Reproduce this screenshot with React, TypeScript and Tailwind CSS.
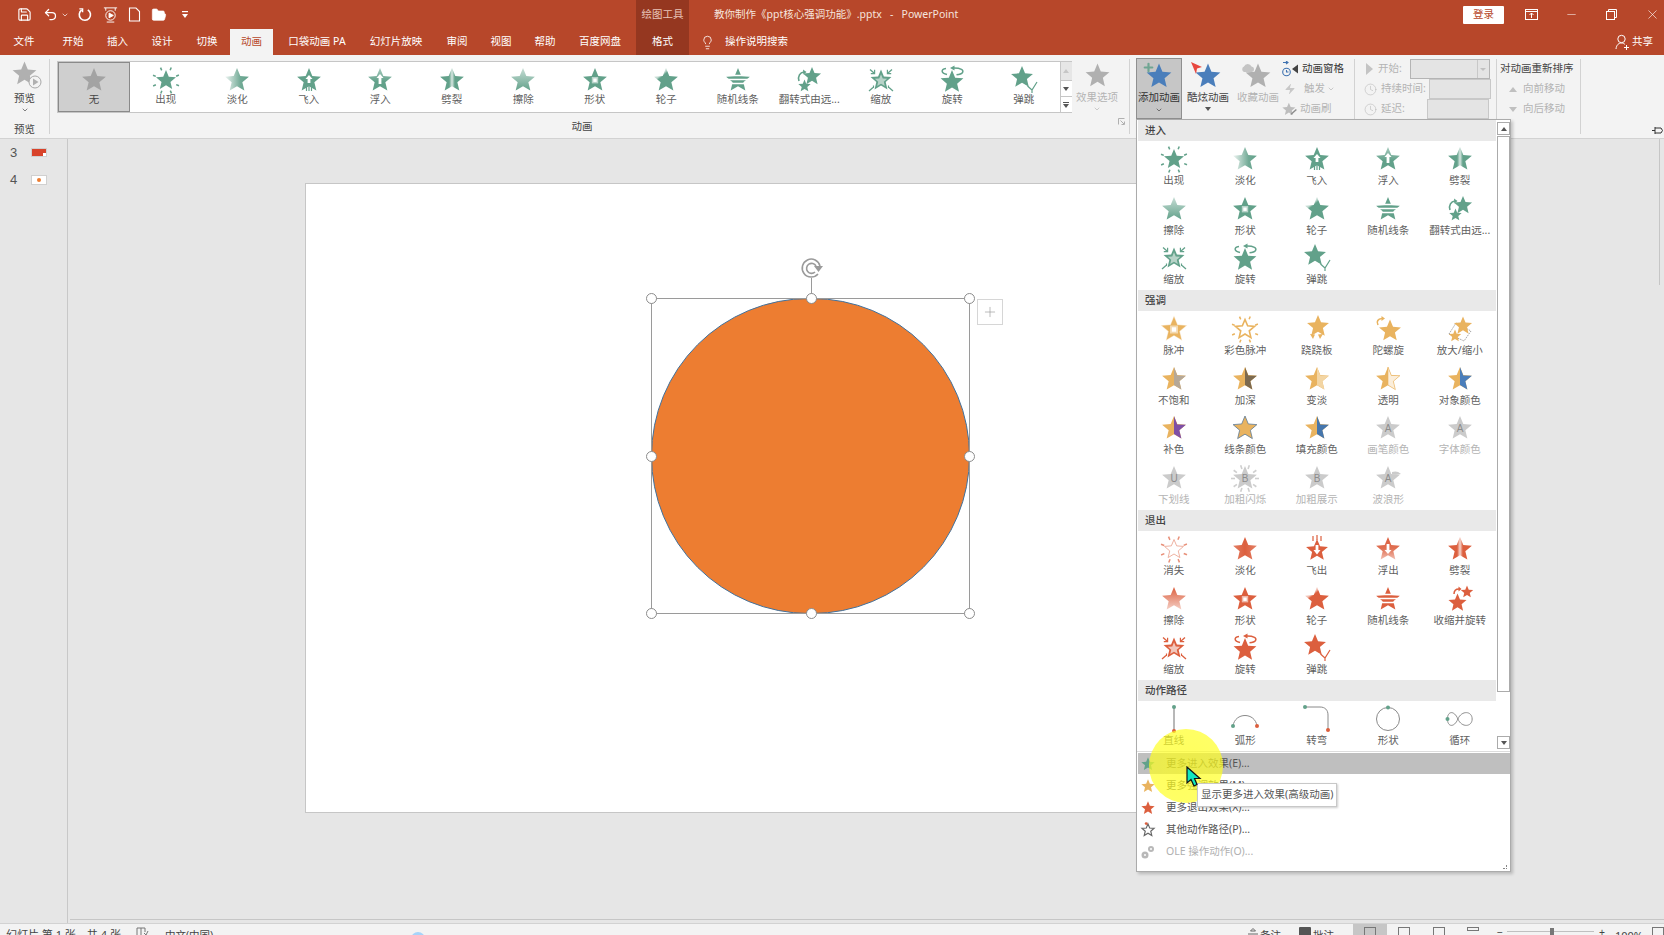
import { useId, type ReactNode } from "react"
import { ChevronDown, Clock, FolderOpen, Lightbulb, Minus, Plus, Save, Undo2, X, Zap } from "lucide-react"

const GREEN = "#62a18a"
const GOLD = "#e9b35f"
const RED = "#dc5f3e"
const GRAY = "#cbcbcb"
const BLUE = "#4a7ebb"

function starPts(cx: number, cy: number, r: number) {
    let pts: string[] = []
    for (let i = 0; i < 10; i++) {
        const a = (-90 + i * 36) * Math.PI / 180
        const rad = i % 2 == 0 ? r : r * 0.45
        pts.push((cx + rad * Math.cos(a)).toFixed(2) + "," + (cy + rad * Math.sin(a)).toFixed(2))
    }
    return pts.join(" ")
}

function rays(cx: number, cy: number, r1: number, r2: number, color: string, n = 8, off = 22, w = 1.5) {
    return Array.from({ length: n }).map((_, i) => {
        const a = (off + i * 360 / n) * Math.PI / 180
        return <line key={i} x1={cx + r1 * Math.cos(a)} y1={cy + r1 * Math.sin(a)} x2={cx + r2 * Math.cos(a)} y2={cy + r2 * Math.sin(a)} stroke={color} strokeWidth={w} />
    })
}

const GRADS: Record<string, [number, number, number, number, [number, number][]]> = {
    fade: [0, 0, 1, 0, [[0, 0.12], [0.65, 0.9], [1, 1]]],
    fadeout: [0, 0, 1, 0, [[0, 0.8], [0.5, 1], [0.85, 0.85], [1, 0.8]]],
    split: [0, 0, 1, 0, [[0, 1], [0.38, 1], [0.5, 0.25], [0.62, 1], [1, 1]]],
    wipe: [0, 0, 0, 1, [[0, 0.35], [1, 1]]],
    wipeout: [0, 0, 0, 1, [[0, 1], [1, 0.3]]],
    float: [0, 0, 0, 1, [[0, 0.55], [0.6, 1], [1, 1]]],
    floatout: [0, 0, 0, 1, [[0, 1], [0.5, 0.9], [1, 0.4]]],
    wheel: [0, 0, 0.6, 0.7, [[0, 0.1], [0.45, 0.4], [0.55, 1], [1, 1]]],
}

function AnimIcon({ k, c }: { k: string, c: string }) {
    const g = "g" + useId().replace(/[^a-zA-Z0-9]/g, "")
    const grad = GRADS[k]
    const main = starPts(12, 12.5, 12.5)
    const rightHalf = "12,0 15.3,8.45 23.9,8.64 17.35,14.24 19.35,22.61 12,18.1"
    let body: ReactNode = <polygon points={main} fill={grad ? `url(#${g})` : c} />
    const arrowUp = <path d="M12 6 L8.5 10 H10.6 V16 H13.4 V10 H15.5 Z" fill="#fff" />
    const half = (col: string) => <>
        <polygon points={main} fill={c} />
        <polygon points={rightHalf} fill={col} />
    </>
    const letter = (t: string, extra?: ReactNode) => <>
        {extra}
        <polygon points={main} fill={c} />
        <text x="12" y="16" textAnchor="middle" fontSize="10" fill="#8b8b8b" fontFamily="Liberation Sans, sans-serif">{t}</text>
    </>
    switch (k) {
        case "appear":
            body = <><polygon points={starPts(12, 12.5, 10.5)} fill={c} />{rays(12, 12.5, 11, 14, c)}</>
            break
        case "vanish":
            body = <><polygon points={starPts(12, 12.5, 10)} fill="#fff" stroke="#eeb2a2" strokeWidth="1" />{rays(12, 12.5, 10.5, 14, "#e88f78")}</>
            break
        case "fly":
            body = <><polygon points={main} fill={c} /><path d="M12 7 L8.5 11 H10.6 V15 H13.4 V11 H15.5 Z" fill="#fff" /><path d="M9.5 17 v6 M12 17 v6 M14.5 17 v6" stroke={c} strokeWidth="1.2" /></>
            break
        case "flyout":
            body = <><polygon points={starPts(12, 13.5, 11.5)} fill={c} /><path d="M10.6 8 V13 H8.5 L12 17.5 L15.5 13 H13.4 V8 Z" fill="#fff" /><path d="M8 -1 v5 M12 -2 v5 M16 -1 v5" stroke={c} strokeWidth="1.2" /></>
            break
        case "float":
            body = <><polygon points={main} fill={`url(#${g})`} />{arrowUp}</>
            break
        case "floatout":
            body = <><polygon points={main} fill={`url(#${g})`} /><path d="M10.6 7 V13 H8.5 L12 17 L15.5 13 H13.4 V7 Z" fill="#fff" /></>
            break
        case "shape":
            body = <><polygon points={main} fill={c} /><rect x="8.8" y="9" width="6.4" height="6.4" fill="#fff" opacity="0.55" /><rect x="10.3" y="10.5" width="3.4" height="3.4" fill="#fff" /></>
            break
        case "lines":
            body = <><polygon points={main} fill={c} /><path d="M0 7.6 H24 M0 11.4 H24 M0 15.4 H24" stroke="#fff" strokeWidth="1.5" /></>
            break
        case "flip":
            body = <><polygon points={starPts(15, 8.5, 9.5)} fill={c} /><polygon points={starPts(7.5, 18, 6.5)} fill={c} /><path d="M2 13 C0.5 8 3 4.5 7 4" stroke={c} strokeWidth="1.6" fill="none" /><path d="M6 1.5 L9.5 4 L6.5 6.5 Z" fill={c} /></>
            break
        case "shrinkspin":
            body = <><polygon points={starPts(9.5, 16, 9.5)} fill={c} /><polygon points={starPts(19, 5, 6.5)} fill={c} /><path d="M6 7 C6 3 8 2 11 2" stroke={c} strokeWidth="1.5" fill="none" /><path d="M10.5 -0.5 L13.5 2 L10.5 4.5 Z" fill={c} /></>
            break
        case "zoom":
            body = <>
                <polygon points={starPts(12, 12.5, 11)} fill={c} />
                <polygon points={starPts(12, 12.8, 6.5)} fill={c == RED ? "#f2c7bb" : "#b7d3c8"} />
                <path d="M1 1.5 L5 5 M23 1.5 L19 5 M0 23 L4 19.5 M24 23 L20 19.5" stroke={c} strokeWidth="1.3" />
                <path d="M5.6 1.8 V5.6 H1.8 M18.4 1.8 V5.6 H22.2 M4.5 17.4 V20 M19.5 17.4 V20" stroke={c} strokeWidth="1.2" fill="none" />
            </>
            break
        case "spin":
            body = <>
                <polygon points={starPts(12, 14, 12)} fill={c} />
                <path d="M7 6.5 C1 5 0.5 1.5 6 0.5 M14 0 C21 0 24 2 22.5 4.5 C21.5 6 19 6.5 16.5 6.8" stroke={c} strokeWidth="1.5" fill="none" />
                <path d="M14.5 -2.5 L10 0 L14.5 2.5 Z" fill={c} />
            </>
            break
        case "bounce":
            body = <>
                <polygon points={starPts(10, 9.5, 11.5)} fill={c} />
                <path d="M15.5 18 L20 22 L25 14 M20 22 V25" stroke={c} strokeWidth="1.2" fill="none" />
            </>
            break
        case "pulse":
            body = <>
                <polygon points={starPts(12, 12.5, 14)} fill={c} opacity="0.35" />
                <polygon points={main} fill={c} />
                <rect x="8" y="8.5" width="8" height="8" fill="#fff" opacity="0.5" />
                <rect x="9.8" y="10.3" width="4.4" height="4.4" fill="#fff" />
            </>
            break
        case "colorpulse":
            body = <><polygon points={starPts(12, 12.5, 10)} fill="#fff" stroke={c} strokeWidth="1.6" />{rays(12, 12.5, 11, 14, c)}</>
            break
        case "teeter":
            body = <>
                <polygon points={starPts(13, 9.5, 11.5)} fill={c} />
                <path d="M5 17 L8 22 L10 17.5 Z M18 17 L15 22 L13 17.5 Z" fill={c} />
            </>
            break
        case "spinner":
            body = <>
                <polygon points={starPts(14, 14, 11.5)} fill={c} />
                <path d="M2 8 C0 4 2 2 6 1.5" stroke={c} strokeWidth="1.6" fill="none" />
                <path d="M5.5 -1 L9 1.5 L5.5 4 Z" fill={c} />
            </>
            break
        case "grow":
            body = <>
                <path d="M1 17 L8 6 L23 14 L16 24 Z" fill="none" stroke="#8b8b8b" strokeWidth="0.8" strokeDasharray="1.5 1" />
                <polygon points={starPts(15, 9, 9.5)} fill={c} />
                <polygon points={starPts(7, 19, 6.5)} fill={c} />
            </>
            break
        case "desat": body = half("#b5a898"); break
        case "darken": body = half("#7c6a50"); break
        case "lighten": body = half("#f3d5a3"); break
        case "transp": body = <><polygon points={main} fill={c} /><polygon points={rightHalf} fill="#fbeedb" stroke={c} strokeWidth="0.6" /></>; break
        case "objcolor": body = half(BLUE); break
        case "complement": body = half("#7e4fa6"); break
        case "linecolor":
            body = <><polygon points={main} fill={c} stroke="#5d7a96" strokeWidth="0.8" /></>
            break
        case "fillcolor": body = half("#4576ad"); break
        case "A": body = letter("A"); break
        case "U": body = letter("U"); break
        case "B": body = letter("B"); break
        case "Bray": body = letter("B", rays(12, 12.5, 10, 14, "#cfcfcf", 10, 0, 1.6)); break
        case "wave":
            body = <>{letter("A")}<path d="M16 6 C19 5 22 5 25 8 C21 9 18 9 16 8 Z" fill={c} /></>
            break
        case "pline":
            body = <><line x1="12" y1="0" x2="12" y2="24" stroke="#9a9a9a" strokeWidth="1.4" /><circle cx="12" cy="0" r="2" fill={GREEN} /><circle cx="12" cy="24" r="2" fill={RED} /></>
            break
        case "parc":
            body = <><path d="M0 19 C2 5 22 5 24 19" fill="none" stroke="#8a8a8a" strokeWidth="1" /><circle cx="0" cy="19" r="2" fill={GREEN} /><circle cx="24" cy="19" r="2" fill={RED} /></>
            break
        case "pturn":
            body = <><path d="M0 0 H15 C20 0 23 3 23 8 V23" fill="none" stroke="#8a8a8a" strokeWidth="1" /><circle cx="0" cy="0" r="2" fill={GREEN} /><circle cx="23" cy="23" r="2" fill={RED} /></>
            break
        case "pcircle":
            body = <><circle cx="12" cy="12" r="11.5" fill="none" stroke="#8a8a8a" strokeWidth="1" /><circle cx="12" cy="0.5" r="2" fill={GREEN} /></>
            break
        case "ploop":
            body = <><path d="M12 12 C8 3 1 4 1 12 C1 20 8 21 12 12 C16 3 27 4 27 12 C27 20 16 21 12 12 Z" transform="translate(-1.5 0) scale(0.95 1)" fill="none" stroke="#8a8a8a" strokeWidth="1" /><circle cx="-0.5" cy="12" r="2" fill={GREEN} /></>
            break
    }
    return <svg width="26" height="26" viewBox="-1 -1 26 26" className="overflow-visible shrink-0">
        {grad && <defs><linearGradient id={g} x1={grad[0]} y1={grad[1]} x2={grad[2]} y2={grad[3]}>
            {grad[4].map(([o, a], i) => <stop key={i} offset={o} stopColor={c} stopOpacity={a} />)}
        </linearGradient></defs>}
        {body}
    </svg>
}

function BigStar({ color, size = 28 }: { color: string, size?: number }) {
    return <svg width={size} height={size} viewBox="0 0 24 24"><polygon points={starPts(12, 12.5, 12)} fill={color} /></svg>
}

function Cell({ label, k, c, dim, tight, width = "w-[71.5px]" }: { label: string, k: string, c: string, dim?: boolean, tight?: boolean, width?: string }) {
    return <div className={`${width} h-full flex flex-col items-center pt-[5px] shrink-0`}>
        <AnimIcon k={k} c={c} />
        <span className={`${tight ? "mt-[0px]" : "mt-[2px]"} text-[10.5px] leading-[12px] whitespace-nowrap ${dim ? "text-[#b4b4b4]" : "text-[#5f5f5f]"}`}>{label}</span>
    </div>
}

const ENTER: [string, string][] = [["出现", "appear"], ["淡化", "fade"], ["飞入", "fly"], ["浮入", "float"], ["劈裂", "split"], ["擦除", "wipe"], ["形状", "shape"], ["轮子", "wheel"], ["随机线条", "lines"], ["翻转式由远...", "flip"], ["缩放", "zoom"], ["旋转", "spin"], ["弹跳", "bounce"]]
const EMPHASIS: [string, string, string][] = [["脉冲", "pulse", GOLD], ["彩色脉冲", "colorpulse", GOLD], ["跷跷板", "teeter", GOLD], ["陀螺旋", "spinner", GOLD], ["放大/缩小", "grow", GOLD], ["不饱和", "desat", GOLD], ["加深", "darken", GOLD], ["变淡", "lighten", GOLD], ["透明", "transp", GOLD], ["对象颜色", "objcolor", GOLD], ["补色", "complement", GOLD], ["线条颜色", "linecolor", GOLD], ["填充颜色", "fillcolor", GOLD], ["画笔颜色", "A", GRAY], ["字体颜色", "A", GRAY], ["下划线", "U", GRAY], ["加粗闪烁", "Bray", GRAY], ["加粗展示", "B", GRAY], ["波浪形", "wave", GRAY]]
const EXIT: [string, string][] = [["消失", "vanish"], ["淡化", "fadeout"], ["飞出", "flyout"], ["浮出", "floatout"], ["劈裂", "split"], ["擦除", "wipeout"], ["形状", "shape"], ["轮子", "wheel"], ["随机线条", "lines"], ["收缩并旋转", "shrinkspin"], ["缩放", "zoom"], ["旋转", "spin"], ["弹跳", "bounce"]]
const PATHS: [string, string][] = [["直线", "pline"], ["弧形", "parc"], ["转弯", "pturn"], ["形状", "pcircle"], ["循环", "ploop"]]

const TABS = [
    { t: "文件", w: "w-[48px]" }, { t: "开始", w: "w-[50px]" }, { t: "插入", w: "w-[39px]" }, { t: "设计", w: "w-[50px]" },
    { t: "切换", w: "w-[43px] pr-[3px]" }, { t: "动画", w: "w-[43px]", active: true }, { t: "口袋动画 PA", w: "w-[90px] pr-[2px]" },
    { t: "幻灯片放映", w: "w-[66px]" }, { t: "审阅", w: "w-[56px]" }, { t: "视图", w: "w-[32px]" }, { t: "帮助", w: "w-[56px]" }, { t: "百度网盘", w: "w-[54px] mr-[9px]" },
]

function SectionHead({ t }: { t: string }) {
    return <div className="h-[21px] bg-[#e9e9e9] pl-[7px] text-[10.5px] leading-[21px] font-medium text-[#444444]">{t}</div>
}

function Section({ t, children }: { t: string, children: ReactNode }) {
    return <>
        <SectionHead t={t} />
        <div className="grid grid-cols-[repeat(5,71.5px)] auto-rows-[49.7px]">{children}</div>
    </>
}

function MiniStar({ c }: { c: string }) {
    return <svg width="14" height="14" viewBox="0 0 24 24"><polygon points={starPts(12, 12.5, 12)} fill={c} /></svg>
}

function Handle({ cls }: { cls: string }) {
    return <div className={`absolute w-[11px] h-[11px] rounded-full bg-white border-[1.5px] border-[#8c8c8c] ${cls}`} />
}

export default function App() {
    return <div className="relative w-[1664px] h-[935px] overflow-hidden flex flex-col bg-[#e6e6e6] font-['Noto_Sans','Noto_Sans_CJK_SC',sans-serif] text-[10.5px]">
        {/* title bar */}
        <div className="h-[29px] bg-[#b7472a] flex items-center text-white shrink-0">
            <div className="w-[636px] flex items-center h-full pl-[17px]">
                <Save size={15} strokeWidth={1.8} />
                <Undo2 size={15} strokeWidth={2} className="ml-[11px]" />
                <ChevronDown size={8} className="ml-[3px]" />
                <svg width="15" height="15" viewBox="0 0 16 16" fill="none" stroke="white" strokeWidth="1.7" className="ml-[8px]"><path d="M5 3.2 A6 6 0 1 0 11.5 3" /><path d="M2.5 2 H6 V5.5" strokeWidth="1.4" /></svg>
                <svg width="17" height="17" viewBox="0 0 18 18" fill="none" stroke="white" strokeWidth="1" className="ml-[10px]"><path d="M2 2 H16 M4 2 V5 M14 2 V5 M5 17 H13" /><circle cx="9" cy="10" r="5" /><path d="M7.5 7.5 L12 10 L7.5 12.5 Z" fill="white" /></svg>
                <svg width="13" height="15" viewBox="0 0 13 15" fill="none" stroke="white" strokeWidth="1.1" className="ml-[9px]"><path d="M1.5 1 H8 L11.5 4.5 V14 H1.5 Z" /></svg>
                <FolderOpen size={16} fill="white" strokeWidth={1} className="ml-[10px]" />
                <svg width="8" height="9" viewBox="0 0 8 9" className="ml-[14px]" fill="white"><rect x="1" y="1" width="6" height="1.2" /><path d="M1 4 H7 L4 8 Z" /></svg>
            </div>
            <div className="w-[53px] h-full bg-[#953720] flex items-center justify-center text-[#e8c4b8] pt-[1px]">绘图工具</div>
            <span className="ml-[25px] text-[#f6e4dd] whitespace-nowrap pt-[1px]">教你制作《ppt核心强调功能》.pptx&nbsp;&nbsp; - &nbsp;&nbsp;PowerPoint</span>
            <div className="ml-auto flex items-center h-full">
                <div className="w-[41px] h-[18px] bg-white rounded-[1px] text-[#b7472a] flex items-center justify-center">登录</div>
                <svg width="13" height="11" viewBox="0 0 13 11" fill="none" stroke="white" strokeWidth="1" className="ml-[21px]"><rect x="0.5" y="0.5" width="12" height="10" /><path d="M0.5 2.5 H12.5" /><path d="M6.5 9 V4 M4.5 6 L6.5 4 L8.5 6" /></svg>
                <Minus size={13} strokeWidth={1} className="ml-[27px]" />
                <svg width="11" height="11" viewBox="0 0 11 11" fill="none" stroke="white" strokeWidth="1" className="ml-[28px]"><rect x="0.5" y="2.5" width="8" height="8" /><path d="M2.5 2.5 V0.5 H10.5 V8.5 H8.5" /></svg>
                <X size={15} strokeWidth={1} className="ml-[28px] mr-[4px]" />
            </div>
        </div>
        {/* tabs */}
        <div className="h-[26px] bg-[#b7472a] flex text-white shrink-0">
            {TABS.map(tab => <div key={tab.t} className={`${tab.w} h-full flex items-center justify-center whitespace-nowrap ${tab.active ? "bg-[#f3f3f3] text-[#b7472a]" : ""}`}>{tab.t}</div>)}
            <div className="w-[53px] h-full bg-[#953720] flex items-center justify-center">格式</div>
            <Lightbulb size={15} strokeWidth={1.3} className="ml-[11px] self-center" />
            <span className="ml-[10px] self-center">操作说明搜索</span>
            <div className="ml-auto flex items-center pr-[11px]">
                <svg width="15" height="16" viewBox="0 0 15 16" fill="none" stroke="white" strokeWidth="1"><circle cx="6.5" cy="5" r="3.7" /><path d="M1 15 C1.5 10.5 4 9 6.5 9 C8 9 9 9.5 10 10.5" /><path d="M9 13.5 H14 M11.5 11 V16" /></svg>
                <span className="ml-[2px]">共享</span>
            </div>
        </div>
        {/* ribbon */}
        <div className="h-[84px] bg-[#f3f3f3] border-b border-[#d2d2d2] flex shrink-0 text-[#444444]">
            <div className="w-[50px] h-[75px] mt-[4px] border-r border-[#d2d2d2] flex flex-col items-center shrink-0">
                <div className="relative mt-[2px] h-[26px]">
                    <BigStar color="#b0b0b0" size={25} />
                    <svg width="14" height="14" viewBox="0 0 14 14" className="absolute -right-[5px] top-[14px]"><circle cx="7" cy="7" r="6" fill="#f3f3f3" stroke="#a8a8a8" /><path d="M5 3.5 L10.5 7 L5 10.5 Z" fill="#b0b0b0" /></svg>
                </div>
                <span className="mt-[4px] leading-[14px]">预览</span>
                <ChevronDown size={8} className="mt-[1px]" />
                <span className="mt-auto leading-[14px] mb-[-2px]">预览</span>
            </div>
            <div className="w-[1080px] h-[75px] mt-[4px] border-r border-[#d2d2d2] shrink-0 flex flex-col pl-[7px]">
                <div className="flex h-[61px]">
                    <div className="mt-[2px] w-[1015px] h-[52px] bg-white border border-[#c6c6c6] flex">
                        <div className="w-[72px] h-full bg-[#cfcfcf] border border-[#8a8a8a] flex flex-col items-center pt-[4px] shrink-0">
                            <AnimIcon k="none" c="#a3a3a3" />
                            <span className="text-[10.5px] leading-[12px] text-[#444444]">无</span>
                        </div>
                        {ENTER.map(([label, k]) => <Cell key={label} label={label} k={k} c={GREEN} tight />)}
                        <div className="ml-auto w-[12px] h-full border-l border-[#c6c6c6] flex flex-col bg-[#f3f3f3] shrink-0">
                            <div className="h-[19px] bg-[#e6e6e6] flex items-center justify-center border-b border-[#c6c6c6]"><div className="w-0 h-0 border-x-[3px] border-x-transparent border-b-[4px] border-b-[#c6c6c6]" /></div>
                            <div className="h-[16px] bg-white flex items-center justify-center border-b border-[#c6c6c6]"><div className="w-0 h-0 border-x-[3px] border-x-transparent border-t-[4px] border-t-[#555555]" /></div>
                            <div className="flex-1 bg-white flex flex-col gap-[1px] items-center justify-center"><div className="w-[6px] h-[1px] bg-[#555555]" /><div className="w-0 h-0 border-x-[3px] border-x-transparent border-t-[4px] border-t-[#555555]" /></div>
                        </div>
                    </div>
                    <div className="w-[50px] flex flex-col items-center shrink-0 text-[#b4b4b4]">
                        <div className="mt-[4px]"><BigStar color="#b0b0b0" size={25} /></div>
                        <span className="mt-[2px] leading-[14px] whitespace-nowrap">效果选项</span>
                        <ChevronDown size={8} className="mt-[1px]" />
                    </div>
                </div>
                <div className="relative flex-1 flex items-center justify-center pr-[22px] pt-[6px]">
                    动画
                    <svg width="7" height="7" viewBox="0 0 7 7" fill="none" stroke="#b0b0b0" className="absolute right-[4px] top-[5px]"><path d="M0.5 6.5 V0.5 H6.5" /><path d="M2.5 2.5 L6 6 M3.5 6.5 H6.5 V3.5" /></svg>
                </div>
            </div>
            <div className="w-[225px] h-[75px] mt-[4px] border-r border-[#d2d2d2] shrink-0 flex pl-[6px]">
                <div className="w-[46px] h-[61px] -mt-[1px] bg-[#c6c6c6] border border-[#8f8f8f] flex flex-col items-center shrink-0">
                    <div className="relative mt-[4px] h-[27px]">
                        <BigStar color={BLUE} size={26} />
                        <Plus size={13} strokeWidth={4} className="absolute -left-[4px] -top-[2px] text-[#6fa592]" />
                    </div>
                    <span className="mt-[0px] leading-[14px] whitespace-nowrap text-[#333333]">添加动画</span>
                    <ChevronDown size={8} className="mt-[2px]" />
                </div>
                <div className="w-[52px] flex flex-col items-center shrink-0">
                    <div className="relative mt-[4px] h-[27px]">
                        <BigStar color={BLUE} size={26} />
                        <svg width="11" height="12" viewBox="0 0 11 12" className="absolute -left-[4px] -top-[1px]"><path d="M0 0 L11 5 L6 6.5 L5 12 Z" fill="#e8473f" /></svg>
                    </div>
                    <span className="mt-[0px] leading-[14px] whitespace-nowrap">酷炫动画</span>
                    <div className="mt-[3px] w-0 h-0 border-x-[3px] border-x-transparent border-t-[4px] border-t-[#555555]" />
                </div>
                <div className="w-[48px] flex flex-col items-center shrink-0 text-[#b4b4b4]">
                    <div className="relative mt-[4px] h-[27px]">
                        <BigStar color="#b0b0b0" size={26} />
                        <svg width="14" height="10" viewBox="0 0 14 10" className="absolute -left-[4px] top-0"><path d="M3 9 A3 3 0 0 1 3 3.5 A4 4 0 0 1 10.5 3.5 A2.8 2.8 0 0 1 11 9 Z" fill="#c4c4c4" /></svg>
                    </div>
                    <span className="mt-[0px] leading-[14px] whitespace-nowrap">收藏动画</span>
                </div>
                <div className="flex flex-col w-[72px] shrink-0">
                    <div className="h-[20px] flex items-center gap-[3px] text-[#333333]">
                        <svg width="17" height="16" viewBox="0 0 17 16" fill="none" stroke="#3f72b0" strokeWidth="1.1"><path d="M1 1.5 H6 M4 0 L6 1.5 L4 3" /><circle cx="4.5" cy="11" r="3.8" /><path d="M4.5 9 V11 H6.5" /><path d="M10 8 L16 3.5 V12.5 Z" fill="#444444" stroke="none" /></svg>
                        <span>动画窗格</span>
                    </div>
                    <div className="h-[20px] flex items-center gap-[8px] text-[#b4b4b4] pl-[2px]">
                        <Zap size={12} fill="#c8c8c8" strokeWidth={0} />
                        <span>触发</span>
                        <ChevronDown size={8} className="-ml-[6px]" />
                    </div>
                    <div className="h-[20px] flex items-center gap-[3px] text-[#b4b4b4]">
                        <svg width="15" height="15" viewBox="0 0 24 24"><polygon points={starPts(11, 12, 11)} fill="#bdbdbd" /><path d="M14 20 L23 12" stroke="#8d8d8d" strokeWidth="2.5" /></svg>
                        <span>动画刷</span>
                    </div>
                </div>
            </div>
            <div className="w-[141px] h-[75px] mt-[4px] shrink-0 flex flex-col text-[#b4b4b4]">
                <div className="h-[20px] flex items-center">
                    <div className="ml-[11px] w-0 h-0 border-y-[6px] border-y-transparent border-l-[7px] border-l-[#c4c4c4]" />
                    <span className="ml-[5px]">开始:</span>
                    <div className="ml-[8px] w-[80px] h-[20px] bg-[#e4e4e4] border border-[#b4b4b4] flex justify-end"><div className="w-[12px] border-l border-[#c8c8c8] flex items-center justify-center"><div className="w-0 h-0 border-x-[3px] border-x-transparent border-t-[3px] border-t-[#c0c0c0]" /></div></div>
                </div>
                <div className="h-[20px] flex items-center">
                    <Clock size={13} strokeWidth={1} className="ml-[9px]" />
                    <span className="ml-[4px] whitespace-nowrap">持续时间:</span>
                    <div className="ml-[3px] w-[62px] h-[20px] bg-[#e4e4e4] border border-[#c8c8c8]" />
                </div>
                <div className="h-[20px] flex items-center">
                    <Clock size={13} strokeWidth={1} className="ml-[9px]" />
                    <span className="ml-[4px] whitespace-nowrap">延迟:</span>
                    <div className="ml-[22px] w-[62px] h-[20px] bg-[#e4e4e4] border border-[#c8c8c8]" />
                </div>
            </div>
            <div className="w-[85px] h-[75px] mt-[4px] border-r border-l border-[#d2d2d2] shrink-0 flex flex-col pl-[3px]">
                <div className="h-[20px] flex items-center whitespace-nowrap text-[#444444]">对动画重新排序</div>
                <div className="h-[20px] flex items-center text-[#b4b4b4] pl-[9px] gap-[6px]"><div className="w-0 h-0 border-x-[4px] border-x-transparent border-b-[5px] border-b-[#c0c0c0]" />向前移动</div>
                <div className="h-[20px] flex items-center text-[#b4b4b4] pl-[9px] gap-[6px]"><div className="w-0 h-0 border-x-[4px] border-x-transparent border-t-[5px] border-t-[#c0c0c0]" />向后移动</div>
            </div>
            <div className="ml-auto self-end mb-[3px] mr-[1px]">
                <svg width="11" height="9" viewBox="0 0 11 9" fill="none" stroke="#333333"><path d="M0 4.5 H3 M3 1 V8 M3 2 H9 L10.5 4.5 L9 7 H3" /></svg>
            </div>
        </div>
        {/* workspace */}
        <div className="flex-1 flex min-h-0">
            <div className="w-[68px] border-r border-[#c8c8c8] shrink-0 flex flex-col pt-[6px] text-[#555555]">
                <div className="h-[27px] flex items-start pl-[10px]">
                    <span className="text-[13px] leading-[16px] w-[21px] font-['Liberation_Sans',sans-serif]">3</span>
                    <div className="mt-[3px] w-[16px] h-[9px] bg-[#d8432a] border border-[#d0d0d0] flex items-end justify-end"><div className="w-[3px] h-[3px] bg-white" /></div>
                </div>
                <div className="h-[27px] flex items-start pl-[10px]">
                    <span className="text-[13px] leading-[16px] w-[21px] font-['Liberation_Sans',sans-serif]">4</span>
                    <div className="mt-[3px] w-[16px] h-[10px] bg-white border border-[#d0d0d0] flex items-center justify-center"><div className="w-[4px] h-[4px] rounded-full bg-[#ed7d31]" /></div>
                </div>
            </div>
            <div className="relative flex-1 pl-[237px] pt-[44px]">
                <div className="relative w-[1120px] h-[630px] bg-white border border-[#c6c6c6]">
                    {/* selected shape */}
                    <div className="absolute left-[345px] top-[114px] w-[319px] h-[316px] rounded-full bg-[#ed7d31] border border-[#41719c]" />
                    <div className="absolute left-[345px] top-[114px] w-[319px] h-[316px] border border-[#9a9a9a]" />
                    <div className="absolute left-[505px] top-[94px] w-[1px] h-[20px] bg-[#9a9a9a]" />
                    <svg width="24" height="24" viewBox="0 0 24 24" fill="none" stroke="#9a9a9a" strokeWidth="1.6" className="absolute left-[494px] top-[73px]">
                        <path d="M18 17 A9 9 0 1 1 20 9" /><path d="M15 15 A5 5 0 1 1 16 9" /><path d="M14 9 H23 L18.5 15 Z" fill="#9a9a9a" stroke="none" />
                    </svg>
                    <Handle cls="left-[340px] top-[109px]" />
                    <Handle cls="left-[500px] top-[109px]" />
                    <Handle cls="left-[658px] top-[109px]" />
                    <Handle cls="left-[340px] top-[267px]" />
                    <Handle cls="left-[658px] top-[267px]" />
                    <Handle cls="left-[340px] top-[424px]" />
                    <Handle cls="left-[500px] top-[424px]" />
                    <Handle cls="left-[658px] top-[424px]" />
                    <div className="absolute left-[671px] top-[115px] w-[26px] h-[26px] border border-[#d6d6d6] flex items-center justify-center">
                        <Plus size={16} strokeWidth={1} className="text-[#9a9a9a]" />
                    </div>
                </div>
                <div className="absolute left-[2px] right-0 bottom-[3px] h-[1px] bg-[#c6c6c6]" />
                <div className="absolute right-[4px] top-0 w-[1px] h-[146px] bg-[#c6c6c6]" />
            </div>
        </div>
        {/* status bar */}
        <div className="h-[12px] bg-[#f3f3f3] border-t border-[#d2d2d2] flex shrink-0 text-[#444444] overflow-hidden">
            <span className="ml-[6px] mt-[4px] leading-[14px] whitespace-nowrap text-[11px]">幻灯片 第 1 张，共 4 张</span>
            <svg width="13" height="12" viewBox="0 0 13 12" fill="none" stroke="#777777" className="ml-[15px] mt-[3px]"><path d="M1 1 H5 V11 H1 Z M5 1 H9 V5 M8 6 L10 8 L12 4" /></svg>
            <span className="ml-[16px] mt-[4px] leading-[14px] whitespace-nowrap">中文(中国)</span>
            <div className="ml-auto flex items-start h-full">
                <svg width="10" height="9" viewBox="0 0 10 9" className="mt-[4px]" fill="none" stroke="#666666"><path d="M5 0.5 L7.5 3 H2.5 Z M0 6 H10 M0 8.5 H10" /></svg>
                <span className="ml-[1px] w-[30px] pl-[1px] mt-[4px] leading-[14px]">备注</span>
                <div className="ml-[10px] mt-[3px] w-[12px] h-[9px] bg-[#555555] rounded-[1px]" />
                <span className="ml-[2px] mt-[4px] leading-[14px]">批注</span>
                <div className="ml-[19px] w-[34px] h-full bg-[#c6c6c6] flex justify-center pt-[3px]"><div className="w-[12px] h-[12px] border border-[#777777]" /></div>
                <div className="w-[35px] flex justify-center pt-[3px]"><div className="w-[12px] h-[12px] border border-[#777777]" /></div>
                <div className="w-[34px] flex justify-center pt-[3px]"><div className="w-[12px] h-[12px] border border-[#777777]" /></div>
                <div className="w-[35px] flex justify-center pt-[3px]"><div className="w-[12px] h-[4px] border border-[#777777]" /></div>
                <span className="ml-[6px] mt-[1px] leading-[14px]">−</span>
                <div className="relative ml-[4px] mt-[7px] w-[87px] h-[1px] bg-[#c0c0c0]"><div className="absolute left-[43px] -top-[3px] w-[4px] h-[9px] bg-[#777777]" /></div>
                <span className="ml-[5px] mt-[1px] leading-[14px]">+</span>
                <span className="ml-[10px] mt-[5px] leading-[14px] text-[11px]">100%</span>
                <div className="ml-[9px] mt-[3px] w-[12px] h-[12px] border border-[#777777]" />
            </div>
        </div>
        {/* blue click mark in the status bar */}
        <div className="absolute left-[411px] top-[932px] w-[14px] h-[14px] rounded-full bg-[#a6d4fa]" />

        {/* add-animation dropdown */}
        <div className="absolute left-[1136px] top-[119px] w-[375px] h-[753px] bg-white border border-[#ababab] shadow-[2px_2px_3px_rgba(0,0,0,0.2)] flex flex-col">
            <div className="flex h-[630px] shrink-0">
                <div className="w-[359px] pl-[1px] shrink-0">
                    <Section t="进入">
                        {ENTER.map(([label, k]) => <Cell key={label} label={label} k={k} c={GREEN} width="w-full" />)}
                    </Section>
                    <Section t="强调">
                        {EMPHASIS.map(([label, k, c]) => <Cell key={label} label={label} k={k} c={c} dim={c == GRAY} width="w-full" />)}
                    </Section>
                    <Section t="退出">
                        {EXIT.map(([label, k]) => <Cell key={label} label={label} k={k} c={RED} width="w-full" />)}
                    </Section>
                    <Section t="动作路径">
                        {PATHS.map(([label, k]) => <Cell key={label} label={label} k={k} c="#888888" width="w-full" />)}
                    </Section>
                </div>
                <div className="ml-[1px] w-[13px] flex flex-col mt-[2px] gap-[1px]">
                    <div className="h-[13px] border border-[#ababab] flex items-center justify-center"><div className="w-0 h-0 border-x-[3px] border-x-transparent border-b-[4px] border-b-[#555555]" /></div>
                    <div className="h-[556px] border border-[#ababab] bg-white" />
                    <div className="mt-auto h-[13px] border border-[#ababab] flex items-center justify-center mb-[1px]"><div className="w-0 h-0 border-x-[3px] border-x-transparent border-t-[4px] border-t-[#555555]" /></div>
                </div>
            </div>
            <div className="h-[1px] bg-[#dcdcdc] mt-[1px]" />
            <div className="mt-[1px] pl-[1px] flex flex-col text-[#555555]">
                <div className="h-[21px] bg-[#bfbfbf] flex items-center pl-[3px] gap-[11px] pt-[1px]"><MiniStar c={GREEN} /><span>更多进入效果(E)...</span></div>
                <div className="h-[22px] flex items-center pl-[3px] gap-[11px] pt-[1px]"><MiniStar c={GOLD} /><span>更多强调效果(M)...</span></div>
                <div className="h-[22px] flex items-center pl-[3px] gap-[11px] pt-[1px]"><MiniStar c={RED} /><span>更多退出效果(X)...</span></div>
                <div className="h-[22px] flex items-center pl-[3px] gap-[11px] pt-[1px]">
                    <svg width="14" height="14" viewBox="0 0 24 24" className="overflow-visible"><polygon points={starPts(12, 12.5, 11)} fill="none" stroke="#666666" strokeWidth="2" /><circle cx="9" cy="1" r="2.5" fill={RED} /></svg>
                    <span>其他动作路径(P)...</span>
                </div>
                <div className="h-[22px] flex items-center pl-[3px] gap-[11px] pt-[1px] text-[#b0b0b0]">
                    <svg width="14" height="14" viewBox="0 0 14 14" fill="#b8b8b8"><circle cx="4" cy="10" r="3.5" /><circle cx="10" cy="4" r="3" /><circle cx="4" cy="10" r="1" fill="white" /><circle cx="10" cy="4" r="1" fill="white" /></svg>
                    <span>OLE 操作动作(O)...</span>
                </div>
            </div>
            <div className="absolute right-[3px] bottom-[2px] grid grid-cols-3 gap-[1px]">
                <i /><i /><i className="w-[1.5px] h-[1.5px] bg-[#888888]" />
                <i /><i className="w-[1.5px] h-[1.5px] bg-[#888888]" /><i className="w-[1.5px] h-[1.5px] bg-[#888888]" />
            </div>
        </div>

        {/* cursor highlight, tooltip, pointer */}
        <div className="absolute left-[1149px] top-[729px] w-[74px] h-[74px] rounded-full bg-[radial-gradient(circle,rgba(255,255,30,0.72)_0%,rgba(255,255,30,0.68)_78%,rgba(255,255,30,0)_100%)]" />
        <div className="absolute left-[1197px] top-[783px] w-[140px] h-[24px] bg-white border border-[#c8c8c8] shadow-[1px_1px_2px_rgba(0,0,0,0.2)] flex items-center pl-[3px] text-[#555555] whitespace-nowrap">显示更多进入效果(高级动画)</div>
        <svg width="16" height="22" viewBox="0 0 16 22" className="absolute left-[1186px] top-[766px]">
            <path d="M1 1 V17 L5 13.5 L8 20 L11 18.5 L8.5 12.5 H14 Z" fill="#10e8c0" stroke="#111111" strokeWidth="1.2" />
        </svg>
    </div>
}
